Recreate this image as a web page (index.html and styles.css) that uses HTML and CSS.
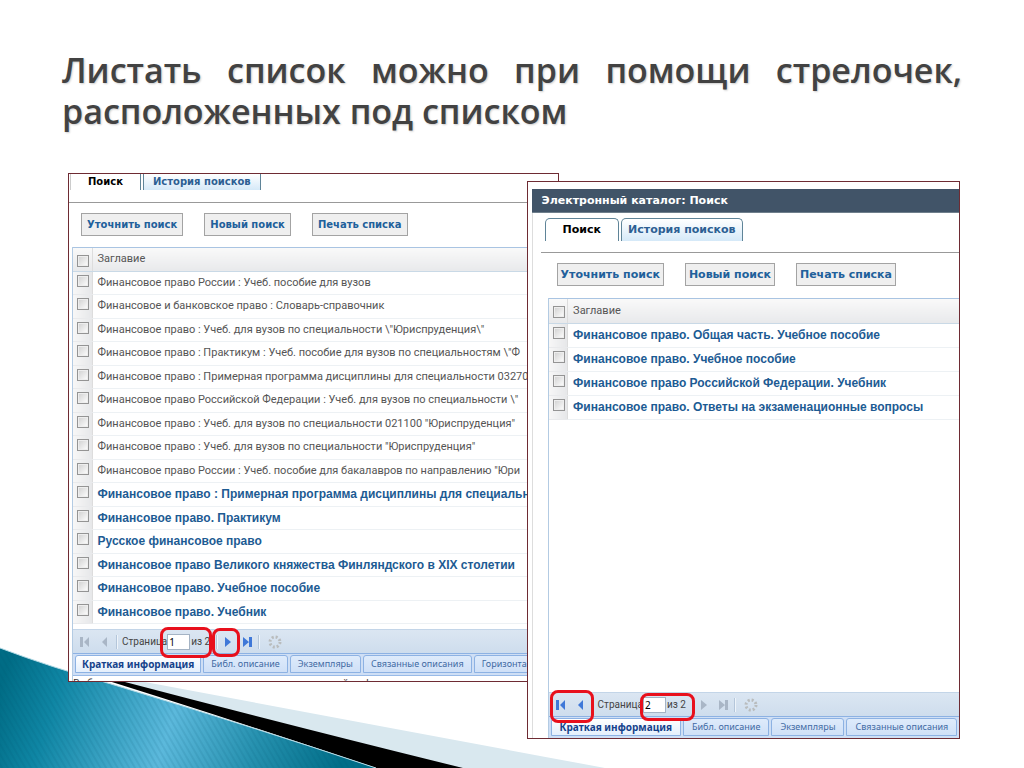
FILE: index.html
```
<!DOCTYPE html>
<html lang="ru">

<head>
    <meta charset="UTF-8">
    <meta name="viewport" content="width=device-width, initial-scale=1.0">
    <title>Листать список</title>
    <link rel="stylesheet" href="styles.css">
</head>

<body>
    <!-- icon set for the pagers -->
    <svg class="sprite" aria-hidden="true">
        <symbol id="i-first" viewBox="0 0 10 12"><path d="M0 1h3v10H0zM9 1v10L4 6z"/></symbol>
        <symbol id="i-prev" viewBox="0 0 10 12"><path d="M7 1v10L2 6z"/></symbol>
        <symbol id="i-next" viewBox="0 0 10 12"><path d="M3 1v10l6-5z"/></symbol>
        <symbol id="i-last" viewBox="0 0 10 12"><path d="M1 1v10l6-5zM7 1h3v10H7z"/></symbol>
        <symbol id="i-load" viewBox="0 0 14 14"><circle cx="7" cy="7" r="5" fill="none" stroke="#b9bcbd" stroke-width="3" stroke-dasharray="2 1.93"/></symbol>
    </svg>

    <main class="slide">
        <svg class="wave" viewBox="0 0 620 122" aria-hidden="true">
            <defs>
                <linearGradient id="teal" gradientUnits="userSpaceOnUse" x1="0" y1="40" x2="330" y2="150">
                    <stop offset="0" stop-color="#006c85"/>
                    <stop offset="0.16" stop-color="#0f86a4"/>
                    <stop offset="0.5" stop-color="#5cb9dc"/>
                    <stop offset="0.75" stop-color="#2691af"/>
                    <stop offset="1" stop-color="#006e88"/>
                </linearGradient>
                <pattern id="lines" width="5" height="5" patternUnits="userSpaceOnUse" patternTransform="rotate(-30)">
                    <path d="M0 0h2v5H0z" fill="#00536b" fill-opacity="0.1"/>
                </pattern>
            </defs>
            <path d="M90 28L145 36Q380 80 605 122H455z" fill="#d9e8ef"/>
            <path d="M80 26L125 36Q300 82 463 122H376Q240 76 80 26z" fill="#000"/>
            <path d="M0 2Q50 21 111 38Q250 80 376 122H0z" fill="url(#teal)"/>
            <path d="M0 2Q50 21 111 38Q250 80 376 122H0z" fill="url(#lines)"/>
            <path d="M0 2Q50 21 111 38Q250 80 376 122" fill="none" stroke="#b5dbe6"/>
        </svg>

        <h1>Листать список можно при помощи стрелочек, расположенных под списком</h1>

        <div class="windows">
            <section class="window window-first">
                <div class="body">
                    <nav class="tabs">
                        <button class="tab active">Поиск</button>
                        <button class="tab">История поисков</button>
                    </nav>
                    <div class="actions">
                        <button>Уточнить поиск</button>
                        <button>Новый поиск</button>
                        <button>Печать списка</button>
                    </div>
                    <div class="grid">
                        <div class="list">
                            <table>
                                <thead>
                                    <tr><th class="check"><input type="checkbox" aria-label="Выбрать все"></th><th>Заглавие</th></tr>
                                </thead>
                                <tbody>
                                    <tr><td class="check"><input type="checkbox" aria-label="Выбрать"></td><td>Финансовое право России : Учеб. пособие для вузов</td></tr>
                                    <tr><td class="check"><input type="checkbox" aria-label="Выбрать"></td><td>Финансовое и банковское право : Словарь-справочник</td></tr>
                                    <tr><td class="check"><input type="checkbox" aria-label="Выбрать"></td><td>Финансовое право : Учеб. для вузов по специальности \"Юриспруденция\"</td></tr>
                                    <tr><td class="check"><input type="checkbox" aria-label="Выбрать"></td><td>Финансовое право : Практикум : Учеб. пособие для вузов по специальностям \"Ф</td></tr>
                                    <tr><td class="check"><input type="checkbox" aria-label="Выбрать"></td><td>Финансовое право : Примерная программа дисциплины для специальности 03270</td></tr>
                                    <tr><td class="check"><input type="checkbox" aria-label="Выбрать"></td><td>Финансовое право Российской Федерации : Учеб. для вузов по специальности \"</td></tr>
                                    <tr><td class="check"><input type="checkbox" aria-label="Выбрать"></td><td>Финансовое право : Учеб. для вузов по специальности 021100 "Юриспруденция"</td></tr>
                                    <tr><td class="check"><input type="checkbox" aria-label="Выбрать"></td><td>Финансовое право : Учеб. для вузов по специальности "Юриспруденция"</td></tr>
                                    <tr><td class="check"><input type="checkbox" aria-label="Выбрать"></td><td>Финансовое право России : Учеб. пособие для бакалавров по направлению "Юри</td></tr>
                                    <tr class="new"><td class="check"><input type="checkbox" aria-label="Выбрать"></td><td>Финансовое право : Примерная программа дисциплины для специальнос</td></tr>
                                    <tr class="new"><td class="check"><input type="checkbox" aria-label="Выбрать"></td><td>Финансовое право. Практикум</td></tr>
                                    <tr class="new"><td class="check"><input type="checkbox" aria-label="Выбрать"></td><td>Русское финансовое право</td></tr>
                                    <tr class="new"><td class="check"><input type="checkbox" aria-label="Выбрать"></td><td>Финансовое право Великого княжества Финляндского в XIX столетии</td></tr>
                                    <tr class="new"><td class="check"><input type="checkbox" aria-label="Выбрать"></td><td>Финансовое право. Учебное пособие</td></tr>
                                    <tr class="new"><td class="check"><input type="checkbox" aria-label="Выбрать"></td><td>Финансовое право. Учебник</td></tr>
                                </tbody>
                            </table>
                        </div>
                        <div class="pager">
                            <button class="off" aria-label="Первая"><svg><use href="#i-first"/></svg></button>
                            <button class="off" aria-label="Предыдущая"><svg><use href="#i-prev"/></svg></button>
                            <i class="sep"></i>
                            <label for="page1">Страница</label>
                            <input type="text" id="page1" value="1">
                            <span class="total">из 2</span>
                            <i class="sep"></i>
                            <button aria-label="Следующая"><svg><use href="#i-next"/></svg></button>
                            <button aria-label="Последняя"><svg><use href="#i-last"/></svg></button>
                            <i class="sep"></i>
                            <button class="load" aria-label="Обновить"><svg><use href="#i-load"/></svg></button>
                            <b class="mark mark-page"></b>
                            <b class="mark mark-next"></b>
                        </div>
                        <nav class="subtabs">
                            <button class="active">Краткая информация</button>
                            <button>Библ. описание</button>
                            <button>Экземпляры</button>
                            <button>Связанные описания</button>
                            <button>Горизонта</button>
                        </nav>
                        <p class="hint">Выберите одну запись из списка для просмотра краткой информации</p>
                    </div>
                </div>
            </section>

            <section class="window window-second">
                <h2>Электронный каталог: Поиск</h2>
                <div class="body">
                    <nav class="tabs">
                        <button class="tab active">Поиск</button>
                        <button class="tab">История поисков</button>
                    </nav>
                    <div class="actions">
                        <button>Уточнить поиск</button>
                        <button>Новый поиск</button>
                        <button>Печать списка</button>
                    </div>
                    <div class="grid">
                        <div class="list">
                            <table>
                                <thead>
                                    <tr><th class="check"><input type="checkbox" aria-label="Выбрать все"></th><th>Заглавие</th></tr>
                                </thead>
                                <tbody>
                                    <tr class="new"><td class="check"><input type="checkbox" aria-label="Выбрать"></td><td>Финансовое право. Общая часть. Учебное пособие</td></tr>
                                    <tr class="new"><td class="check"><input type="checkbox" aria-label="Выбрать"></td><td>Финансовое право. Учебное пособие</td></tr>
                                    <tr class="new"><td class="check"><input type="checkbox" aria-label="Выбрать"></td><td>Финансовое право Российской Федерации. Учебник</td></tr>
                                    <tr class="new"><td class="check"><input type="checkbox" aria-label="Выбрать"></td><td>Финансовое право. Ответы на экзаменационные вопросы</td></tr>
                                </tbody>
                            </table>
                        </div>
                        <div class="pager">
                            <button aria-label="Первая"><svg><use href="#i-first"/></svg></button>
                            <button aria-label="Предыдущая"><svg><use href="#i-prev"/></svg></button>
                            <i class="sep"></i>
                            <label for="page2">Страница</label>
                            <input type="text" id="page2" value="2">
                            <span class="total">из 2</span>
                            <i class="sep"></i>
                            <button class="off" aria-label="Следующая"><svg><use href="#i-next"/></svg></button>
                            <button class="off" aria-label="Последняя"><svg><use href="#i-last"/></svg></button>
                            <i class="sep"></i>
                            <button class="load" aria-label="Обновить"><svg><use href="#i-load"/></svg></button>
                            <b class="mark mark-prev"></b>
                            <b class="mark mark-page"></b>
                        </div>
                        <nav class="subtabs">
                            <button class="active">Краткая информация</button>
                            <button>Библ. описание</button>
                            <button>Экземпляры</button>
                            <button>Связанные описания</button>
                        </nav>
                    </div>
                </div>
            </section>
        </div>
    </main>
</body>

</html>
```
FILE: styles.css
```
* {
    box-sizing: border-box;
}

body {
    margin: 0;
    background: #fff;
    font-family: "Liberation Sans", Arial, sans-serif;
    font-size: 12px;
}

button {
    margin: 0;
    padding: 0;
    border: none;
    background: none;
    cursor: pointer;
    white-space: nowrap;
}

.sprite {
    display: none;
}

.slide {
    position: relative;
    min-height: 100vh;
    overflow: hidden;
    padding: 50px 62px 29px;
}

.wave {
    position: absolute;
    left: 0;
    bottom: 0;
    width: 620px;
    height: 122px;
}

h1 {
    margin: 0;
    font: 600 34px/41px "Open Sans", "Noto Sans", sans-serif;
    color: #424242;
    text-align: justify;
    text-shadow: 1px 1px 2px rgba(0, 0, 0, .2);
}

/* windows */
.windows {
    position: relative;
    display: flex;
    align-items: flex-start;
    margin: 41px 2px 0 6px;
}

.window {
    overflow: hidden;
    min-width: 0;
    border: 1px solid #6e2b33;
    background: #fff;
}

.window-first {
    flex: none;
    width: 55%;
    height: 509px;
}

.window-second {
    flex: 1;
    position: relative;
    height: 558px;
    margin: 8px 0 0 -32px;
    padding: 7px 0 0 4px;
}

.window-second .body {
    padding: 5px 0 0 8px;
    border-left: 1px solid #ddd;
}

h2 {
    margin: 0;
    padding-left: 10px;
    border-bottom: 1px solid #6f7f8c;
    background: #415468;
    color: #fff;
    font: bold 11px/23px "DejaVu Sans", Verdana, sans-serif;
}

/* top tabs */
.tabs {
    display: flex;
    gap: 2px;
    height: 35px;
    padding-left: 4px;
    border-bottom: 1px solid #999;
}

.tab {
    height: 23px;
    padding: 0 6px;
    border: 1px solid #5f8498;
    border-bottom: none;
    border-radius: 5px 5px 0 0;
    background: linear-gradient(#fff, #d5e9f8);
    color: #2d5f93;
    font: bold 11px/14px "DejaVu Sans", Verdana, sans-serif;
}

.tab.active {
    padding: 0 17px;
    background: #fff;
    color: #000;
}

.window-first .tabs {
    height: 29px;
    padding-left: 1px;
}

.window-first .tab {
    height: 16px;
    padding: 0 9px;
    border-top: none;
    border-radius: 0;
    font-size: 10px;
}

.window-first .tab.active {
    padding: 0 17px;
    border-left-color: #ccc;
}

.actions {
    display: flex;
    gap: 21px;
    padding: 10px 0 11px 12px;
}

.actions button {
    height: 23px;
    padding: 0 5px;
    border: 1px solid #a3a3a3;
    background: #efefef;
    color: #21609b;
    font: bold 10px/14px "DejaVu Sans", Verdana, sans-serif;
}

.window-second .actions {
    padding: 10px 0 12px 16px;
}

.window-second .actions button {
    padding: 0 3px;
    font-size: 11px;
}

/* result list */
.grid {
    margin-left: 3px;
    border-left: 1px solid #b3cbe3;
}

.window-second .grid {
    margin-left: 7px;
}

.list {
    height: 382px;
    overflow: hidden;
    border-top: 1px solid #a9c4e2;
}

.window-second .list {
    height: 394px;
}

table {
    width: 100%;
    table-layout: fixed;
    border-collapse: collapse;
}

.window-first table {
    height: 376px;
}

th,
td {
    height: 23px;
    padding: 0 0 0 5px;
    border-bottom: 1px solid #edf1f4;
    color: #555;
    font: 11px/14px Roboto, Arial, sans-serif;
    text-align: left;
    white-space: nowrap;
}

.window-second th,
.window-second td {
    height: 24px;
}

th {
    border-bottom-color: #c9d9e6;
    background: linear-gradient(#f9f9f9, #e8e9eb);
}

.check {
    width: 19px;
    padding: 3px 0 0 4px;
    border-right: 1px solid #ddd;
}

td.check {
    border-bottom-color: #e9eaec;
    background: linear-gradient(90deg, #f7f7f7, #e6e7e9);
    vertical-align: top;
}

.new td {
    color: #1d5b93;
    font: bold 12px/14px "Liberation Sans", Arial, sans-serif;
}

.check input {
    display: block;
    appearance: none;
    width: 12px;
    height: 12px;
    margin: 0;
    border: 1px solid #949494;
    background: linear-gradient(135deg, #cfcfcf, #fff);
    box-shadow: inset 0 0 0 1px #eee;
}

/* pager */
.pager {
    position: relative;
    display: flex;
    align-items: center;
    height: 25px;
    padding-left: 7px;
    border-top: 1px solid #c3d5e8;
    border-bottom: 1px solid #8db2e3;
    background: linear-gradient(#dbe6f2, #cedded);
    color: #444;
    font: 10px/14px Roboto, Tahoma, sans-serif;
}

.pager svg {
    display: block;
    width: 10px;
    height: 12px;
    fill: #3f78d8;
}

.pager button + button {
    margin-left: 10px;
}

.pager .off svg {
    fill: #a9b6c6;
}

.pager .load {
    margin-left: 4px;
}

.pager .load svg {
    width: 14px;
    height: 14px;
}

.sep {
    width: 1px;
    height: 14px;
    margin: 0 5px 0 6px;
    background: #b4c6da;
    box-shadow: 1px 0 #eef4fa;
}

.pager input {
    width: 23px;
    height: 16px;
    margin: 0 1px 0 0;
    padding: 0 1px;
    border: 1px solid #a4b3c4;
    background: #fff;
    color: #000;
    font: 10px/14px "Noto Sans", Tahoma, sans-serif;
}

.mark {
    position: absolute;
    border: 3px solid #e8101c;
    border-radius: 8px;
}

.window-first .mark-page {
    top: -3px;
    left: 87px;
    width: 52px;
    height: 31px;
}

.mark-next {
    top: -2px;
    left: 139px;
    width: 28px;
    height: 29px;
}

.mark-prev {
    top: -3px;
    left: 1px;
    width: 44px;
    height: 33px;
}

.window-second .mark-page {
    top: 0;
    left: 91px;
    width: 55px;
    height: 28px;
}

/* bottom tabs */
.subtabs {
    display: flex;
    gap: 2px;
    height: 22px;
    padding: 1px 0 2px 2px;
    border-bottom: 1px solid #99bbe8;
    background: #cfdff5;
}

.subtabs button {
    flex: none;
    padding: 0 7px;
    border: 1px solid #8db2e3;
    border-radius: 3px 3px 0 0;
    background: linear-gradient(#deebfb, #cfe0f7);
    color: #416aa3;
    font: 9px/14px "Noto Sans", Tahoma, sans-serif;
}

.subtabs .active {
    padding: 0 6px;
    background: linear-gradient(#fff, #e4effc);
    color: #15428b;
    font-size: 10px;
    font-weight: bold;
}

.window-second .subtabs button {
    padding: 0 8px;
}

.hint {
    margin: 0;
    color: #333;
    font: 10px/14px "Noto Sans", Tahoma, sans-serif;
    white-space: nowrap;
}
```
